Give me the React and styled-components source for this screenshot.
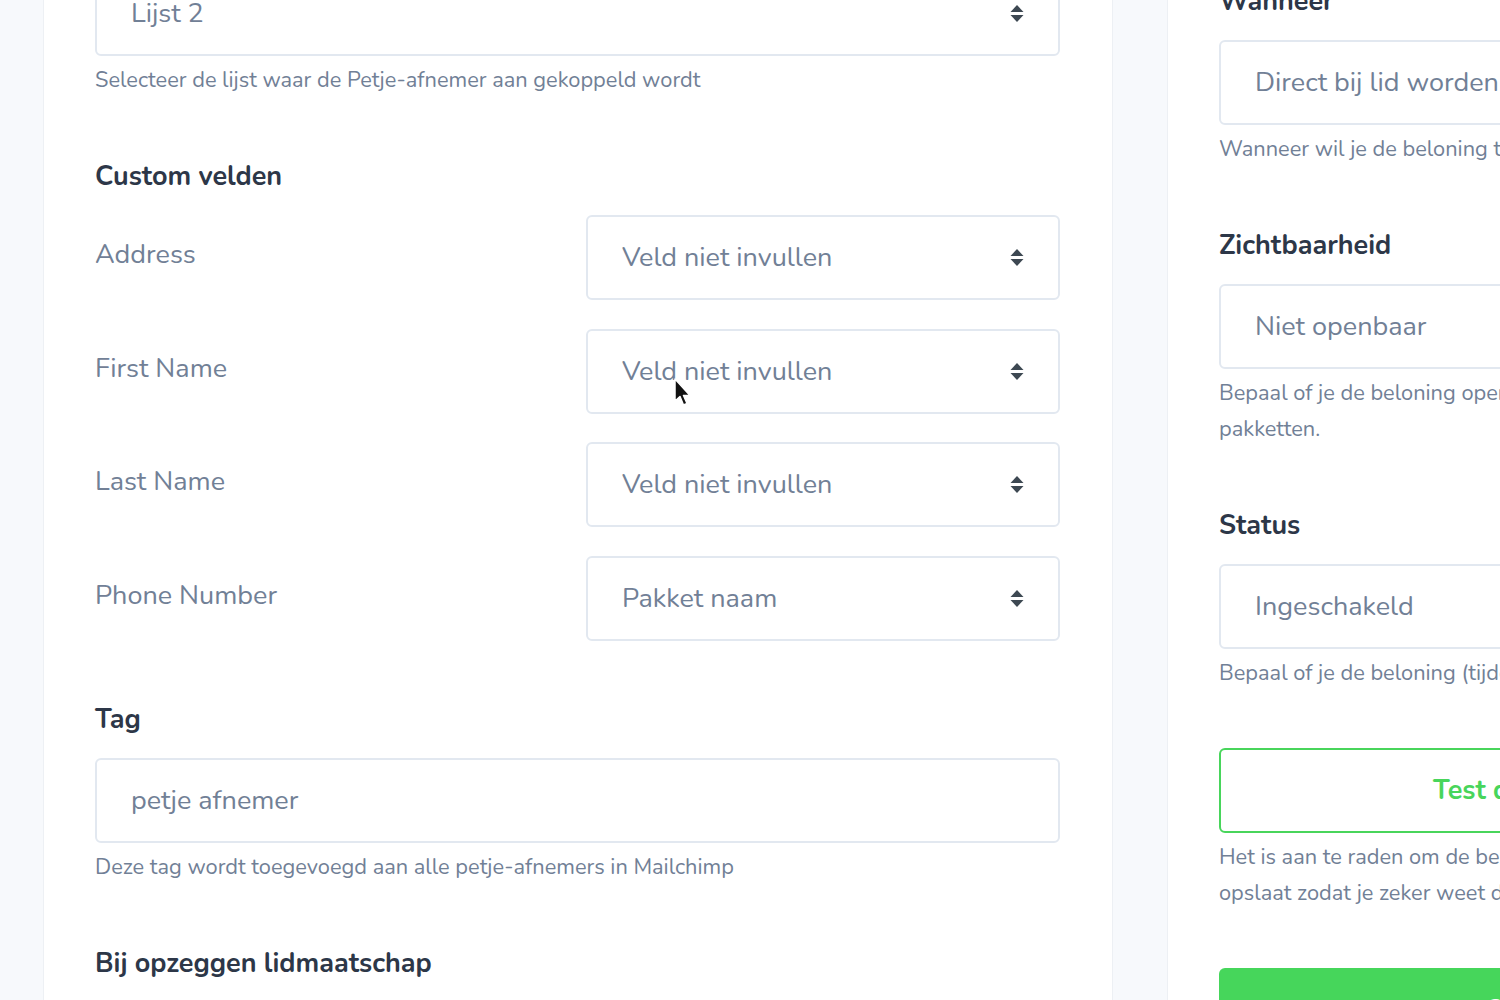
import React from 'react';
import styled, { createGlobalStyle } from 'styled-components';

const GlobalStyle = createGlobalStyle`
    html, body {
        margin: 0;
        padding: 0;
        background: #f7f9fc;
        font-family: "Nunito", "Lato", "Open Sans", sans-serif;
        overflow: hidden;
    }
`;

function Arrows() {
    return (
        <svg width="14" height="19" viewBox="0 0 14 19">
            <path d="M7 1 L13.5 8 H0.5 Z" fill="#3d4852" />
            <path d="M0.5 11 H13.5 L7 18 Z" fill="#3d4852" />
        </svg>
    );
}

function Cursor() {
    return (
        <svg width="22" height="30" viewBox="0 0 22 30">
            <path d="M2 1 L2 23 L7 18.5 L10.5 27 L14 25.5 L10.5 17.5 L17 17.5 Z"
                fill="#111" stroke="#fff" strokeWidth="1.5" strokeLinejoin="round" />
        </svg>
    );
}

function Select({ value }) {
    return (
        <SelectBox>
            <span>{value}</span>
            <Arrows />
        </SelectBox>
    );
}

function App() {
    const fields = [
        { label: 'Address', value: 'Veld niet invullen' },
        { label: 'First Name', value: 'Veld niet invullen', cursor: true },
        { label: 'Last Name', value: 'Veld niet invullen' },
        { label: 'Phone Number', value: 'Pakket naam' },
    ];

    return (
        <>
            <GlobalStyle />
            <Page>
                <MainCard>
                    <Select value="Lijst 2" />
                    <Help>Selecteer de lijst waar de Petje-afnemer aan gekoppeld wordt</Help>

                    <Heading>Custom velden</Heading>
                    <FieldList>
                        {fields.map((f) => (
                            <FieldRow key={f.label}>
                                <FieldLabel>{f.label}</FieldLabel>
                                <FieldSelect>
                                    <Select value={f.value} />
                                    {f.cursor && <CursorWrap><Cursor /></CursorWrap>}
                                </FieldSelect>
                            </FieldRow>
                        ))}
                    </FieldList>

                    <Heading>Tag</Heading>
                    <TextInput defaultValue="petje afnemer" />
                    <Help>Deze tag wordt toegevoegd aan alle petje-afnemers in Mailchimp</Help>

                    <Heading>Bij opzeggen lidmaatschap</Heading>
                </MainCard>

                <SideCard>
                    <SideInner>
                        <Heading first>Wanneer</Heading>
                        <Select value="Direct bij lid worden" />
                        <Help>Wanneer wil je de beloning toekennen aan je nieuwe leden?</Help>

                        <Heading>Zichtbaarheid</Heading>
                        <Select value="Niet openbaar" />
                        <Help>Bepaal of je de beloning openbaar maakt op de pagina met pakketten.</Help>

                        <Heading>Status</Heading>
                        <Select value="Ingeschakeld" />
                        <Help>Bepaal of je de beloning (tijdelijk) wilt in- of uitschakelen.</Help>

                        <OutlineButton>Test de beloning</OutlineButton>
                        <Help>Het is aan te raden om de beloning eerst te testen voor je hem opslaat zodat je zeker weet dat alles werkt.</Help>

                        <PrimaryButton>Opslaan</PrimaryButton>
                    </SideInner>
                </SideCard>
            </Page>
        </>
    );
}

const Page = styled.div`
    display: flex;
    align-items: flex-start;
    gap: 54px;
    padding-left: 43px;
    height: 1000px;
    width: 1900px;
    overflow: hidden;
`;

const MainCard = styled.div`
    flex: 0 0 1070px;
    box-sizing: border-box;
    background: #fff;
    border-left: 1px solid #edf0f4;
    border-right: 1px solid #edf0f4;
    padding: 0 52px 0 51px;
    margin-top: -29px;
    height: 1100px;
`;

const SideCard = styled.div`
    flex: 0 0 760px;
    box-sizing: border-box;
    background: #fff;
    border-left: 1px solid #edf0f4;
    padding: 0 51px;
    margin-top: -16px;
    height: 1100px;
`;

const SideInner = styled.div`
    width: 636px;
`;

const Heading = styled.h3`
    margin: ${(p) => (p.first ? '0' : '61px')} 0 20px;
    font-size: 27px;
    line-height: 36px;
    font-weight: 700;
    color: #2d3748;
`;

const Help = styled.p`
    margin: 6px 0 0;
    font-size: 21.8px;
    line-height: 36px;
    color: #718096;
`;

const SelectBox = styled.div`
    box-sizing: border-box;
    height: 85px;
    display: flex;
    align-items: center;
    justify-content: space-between;
    padding: 0 34px 0 34px;
    background: #fff;
    border: 2px solid #e2e8f0;
    border-radius: 6px;
    font-size: 27px;
    color: #718096;
    white-space: nowrap;
    overflow: hidden;
`;

const FieldList = styled.div`
    display: flex;
    flex-direction: column;
    gap: 28.5px;
`;

const FieldRow = styled.div`
    display: flex;
    align-items: flex-start;
    justify-content: space-between;
`;

const FieldLabel = styled.div`
    padding-top: 22px;
    font-size: 27px;
    line-height: 36px;
    color: #718096;
`;

const FieldSelect = styled.div`
    position: relative;
    width: 474px;
`;

const CursorWrap = styled.div`
    position: absolute;
    left: 87px;
    top: 49px;
    pointer-events: none;
`;

const TextInput = styled.input`
    box-sizing: border-box;
    display: block;
    width: 100%;
    height: 85px;
    padding: 0 34px;
    border: 2px solid #e2e8f0;
    border-radius: 6px;
    font-family: inherit;
    font-size: 27px;
    color: #718096;
    outline: none;
`;

const OutlineButton = styled.button`
    box-sizing: border-box;
    display: block;
    width: 100%;
    height: 85px;
    margin-top: 57px;
    background: #fff;
    border: 2px solid #48d55b;
    border-radius: 6px;
    font-family: inherit;
    font-size: 27px;
    font-weight: 700;
    color: #48d55b;
`;

const PrimaryButton = styled.button`
    box-sizing: border-box;
    display: block;
    width: 100%;
    height: 85px;
    margin-top: 57px;
    background: #46d65b;
    border: none;
    border-radius: 6px;
    font-family: inherit;
    font-size: 27px;
    font-weight: 700;
    color: #fff;
`;

export default App;
